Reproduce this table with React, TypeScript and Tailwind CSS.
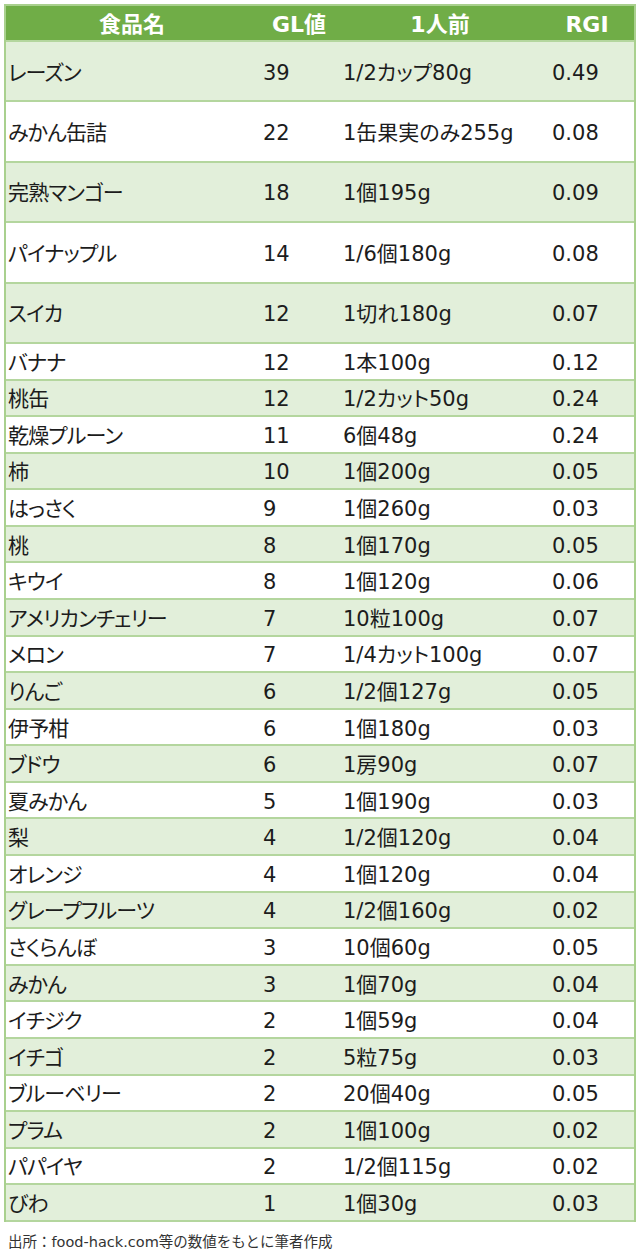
import React from "react";

type Row = [string, string, string, string];

const tall: Row[] = [
  ["レーズン", "39", "1/2カップ80g", "0.49"],
  ["みかん缶詰", "22", "1缶果実のみ255g", "0.08"],
  ["完熟マンゴー", "18", "1個195g", "0.09"],
  ["パイナップル", "14", "1/6個180g", "0.08"],
  ["スイカ", "12", "1切れ180g", "0.07"],
];

const small: Row[] = [
  ["バナナ", "12", "1本100g", "0.12"],
  ["桃缶", "12", "1/2カット50g", "0.24"],
  ["乾燥プルーン", "11", "6個48g", "0.24"],
  ["柿", "10", "1個200g", "0.05"],
  ["はっさく", "9", "1個260g", "0.03"],
  ["桃", "8", "1個170g", "0.05"],
  ["キウイ", "8", "1個120g", "0.06"],
  ["アメリカンチェリー", "7", "10粒100g", "0.07"],
  ["メロン", "7", "1/4カット100g", "0.07"],
  ["りんご", "6", "1/2個127g", "0.05"],
  ["伊予柑", "6", "1個180g", "0.03"],
  ["ブドウ", "6", "1房90g", "0.07"],
  ["夏みかん", "5", "1個190g", "0.03"],
  ["梨", "4", "1/2個120g", "0.04"],
  ["オレンジ", "4", "1個120g", "0.04"],
  ["グレープフルーツ", "4", "1/2個160g", "0.02"],
  ["さくらんぼ", "3", "10個60g", "0.05"],
  ["みかん", "3", "1個70g", "0.04"],
  ["イチジク", "2", "1個59g", "0.04"],
  ["イチゴ", "2", "5粒75g", "0.03"],
  ["ブルーベリー", "2", "20個40g", "0.05"],
  ["プラム", "2", "1個100g", "0.02"],
  ["パパイヤ", "2", "1/2個115g", "0.02"],
  ["びわ", "1", "1個30g", "0.03"],
];

function DataRow({ row, idx, tallRow }: { row: Row; idx: number; tallRow: boolean }) {
  const bg = idx % 2 === 0 ? "bg-[#e2efda]" : "bg-white";
  const h = tallRow ? "h-[60.4px]" : "h-[36.58px]";
  return (
    <div className={`grid grid-cols-[252px_82px_200px_94px] items-center pt-[4px] border-b-2 border-[#b4d69e] ${bg} ${h}`}>
      <div className="pl-[2px] whitespace-nowrap tracking-[-0.04em]">{row[0]}</div>
      <div className="pl-[5px]">{row[1]}</div>
      <div className="pl-[3px] whitespace-nowrap">{row[2]}</div>
      <div className="pl-[12px]">{row[3]}</div>
    </div>
  );
}

export default function App() {
  const all = [...tall.map((r) => ({ r, t: true })), ...small.map((r) => ({ r, t: false }))];
  return (
    <div
      className="w-[640px] h-[1257px] bg-white pt-[4px] text-[#1c1c1c] overflow-hidden"
      style={{ fontFamily: '"DejaVu Sans", "Noto Sans CJK JP", sans-serif' }}
    >
      <div className="ml-[4px] w-[632px] border-2 border-b-0 border-[#a9d08e] text-[21px] leading-none [font-feature-settings:'palt']">
        <div className="grid grid-cols-[252px_82px_200px_94px] items-center h-[36px] pt-[3px] bg-[#70ad47] border-b-2 border-[#b4d69e] text-white font-bold text-[22px]">
          <div className="text-center">食品名</div>
          <div className="text-center">GL値</div>
          <div className="text-center">1人前</div>
          <div className="text-center">RGI</div>
        </div>
        {all.map((x, i) => (
          <DataRow key={i} row={x.r} idx={i} tallRow={x.t} />
        ))}
      </div>
      <div className="ml-[8px] mt-[13px] text-[14.5px] leading-none text-[#333]">出所：food-hack.com等の数値をもとに筆者作成</div>
    </div>
  );
}
